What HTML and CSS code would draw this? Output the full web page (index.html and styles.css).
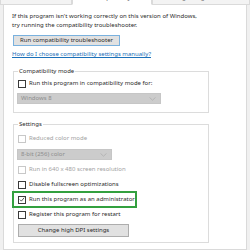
FILE: index.html
```html
<!DOCTYPE html>
<html lang="en">
<head>
    <meta charset="UTF-8">
    <title>Compatibility</title>
    <link rel="stylesheet" href="styles.css">
</head>
<body>
    <div class="tabs">
        <div class="tab tab-general"><span>General</span></div>
        <div class="tab tab-active"><span>Compatibility</span></div>
        <div class="tab tab-digital"><span>Digital Signatures</span></div>
    </div>

    <div class="panel">
        <p class="intro">If this program isn't working correctly on this version of Windows,<br>try running the compatibility troubleshooter.</p>
        <button class="btn btn-default btn-troubleshoot">Run compatibility troubleshooter</button>
        <a class="link" href="#">How do I choose compatibility settings manually?</a>

        <!-- Compatibility mode -->
        <fieldset class="group group-compat">
            <legend>Compatibility mode</legend>
            <label class="check">
                <span class="box"></span>
                Run this program in compatibility mode for:
            </label>
            <div class="select select-os disabled">
                <span>Windows 8</span>
                <svg class="chevron" width="7" height="4" viewBox="0 0 7 4"><path d="M0.5 0.5 L3.5 3.2 L6.5 0.5" fill="none" stroke="#b3b3b3" stroke-width="0.9"/></svg>
            </div>
        </fieldset>

        <!-- Settings -->
        <fieldset class="group group-settings">
            <legend>Settings</legend>
            <label class="check disabled row-first">
                <span class="box"></span>
                Reduced color mode
            </label>
            <div class="select select-color disabled">
                <span>8-bit (256) color</span>
                <svg class="chevron" width="7" height="4" viewBox="0 0 7 4"><path d="M0.5 0.5 L3.5 3.2 L6.5 0.5" fill="none" stroke="#b3b3b3" stroke-width="0.9"/></svg>
            </div>
            <label class="check disabled">
                <span class="box"></span>
                Run in 640 x 480 screen resolution
            </label>
            <label class="check">
                <span class="box"></span>
                Disable fullscreen optimizations
            </label>
            <div class="highlight">
                <label class="check">
                    <span class="box checked">
                        <svg width="7" height="7" viewBox="0 0 7 7"><path d="M1 3.6 L2.8 5.4 L6 1.4" fill="none" stroke="#222" stroke-width="0.9"/></svg>
                    </span>
                    Run this program as an administrator
                </label>
            </div>
            <label class="check row-restart">
                <span class="box"></span>
                Register this program for restart
            </label>
            <button class="btn btn-dpi">Change high DPI settings</button>
        </fieldset>
    </div>
</body>
</html>
```

FILE: styles.css
```css
* {
    margin: 0;
    padding: 0;
    box-sizing: border-box;
}

body {
    font-family: 'Noto Sans', 'Liberation Sans', sans-serif;
    font-size: 6px;
    line-height: 9px;
    color: #2b2b2b;
    background-color: #f0f0f0;
    width: 250px;
    height: 250px;
    overflow: hidden;
}

/* Tabs (only their lower edge is visible) */
.tabs {
    display: flex;
    height: 5px;
}

.tab {
    height: 5px;
    overflow: hidden;
    background-color: #f3f3f3;
    border: 1px solid #dadada;
    border-top: none;
    text-align: center;
    color: #444;
}

.tab span {
    display: block;
    margin-top: -6px;
}

.tab-general {
    width: 72px;
}

.tab-active {
    width: 80px;
    background-color: #fff;
    border-bottom-color: #fff;
}

.tab-digital {
    flex: 1;
}

/* Page */
.panel {
    margin-left: 3px;
    width: 244px;
    height: 245px;
    background-color: #fff;
    border: 1px solid #dadada;
    border-top: none;
    padding: 7px 0 0 8px;
    display: flex;
    flex-direction: column;
    align-items: flex-start;
}

.btn {
    font-family: inherit;
    font-size: 6px;
    line-height: 9px;
    color: #2b2b2b;
    background-color: #e1e1e1;
    border: 1px solid #adadad;
    text-align: center;
    white-space: nowrap;
}

.btn-default {
    border-color: #79b1de;
}

.btn-troubleshoot {
    margin-top: 5px;
    margin-left: 1px;
    width: 107px;
    height: 11px;
}

.link {
    margin-top: 4px;
    color: #1a6fb8;
    text-decoration: underline;
    white-space: nowrap;
}

/* Group boxes */
.group {
    width: 196px;
    margin-left: 1px;
    border: 1px solid #dcdcdc;
    padding: 0 0 0 4px;
    display: flex;
    flex-direction: column;
    align-items: flex-start;
}

.group legend {
    padding: 0 1px;
}

.group-compat {
    margin-top: 8px;
    padding-bottom: 8px;
}

.group-settings {
    margin-top: 7px;
    padding-bottom: 5px;
}

.check {
    display: flex;
    align-items: center;
    height: 15px;
    white-space: nowrap;
}

.group-compat .check {
    height: 9px;
    margin-top: 3px;
}

.row-first {
    margin-top: 2px;
}

.row-restart {
    height: 11px;
    margin-top: 1px;
}

.box {
    width: 8px;
    height: 8px;
    margin-right: 3px;
    border: 1px solid #3a3a3a;
    background-color: #fff;
    display: flex;
    align-items: center;
    justify-content: center;
}

.check.disabled {
    color: #a2a2a2;
}

.check.disabled .box {
    border-color: #c8c8c8;
}

.select {
    display: flex;
    align-items: center;
    justify-content: space-between;
    height: 11px;
    margin-left: -1px;
    padding: 0 4px 0 3px;
    background-color: #cccccc;
    border: 1px solid #c6c6c6;
    color: #8d8d8d;
}

.select-os {
    width: 144px;
    margin-top: 5px;
}

.select-color {
    width: 95px;
    margin-top: 3px;
    margin-bottom: 2px;
}

.highlight {
    margin: -1px 0 0 -6px;
    padding: 0 0 0 4px;
    width: 125px;
    height: 17px;
    border: 2px solid #33a03f;
    display: flex;
    align-items: center;
}

.btn-dpi {
    margin-top: 4px;
    width: 111px;
    height: 13px;
}
```
